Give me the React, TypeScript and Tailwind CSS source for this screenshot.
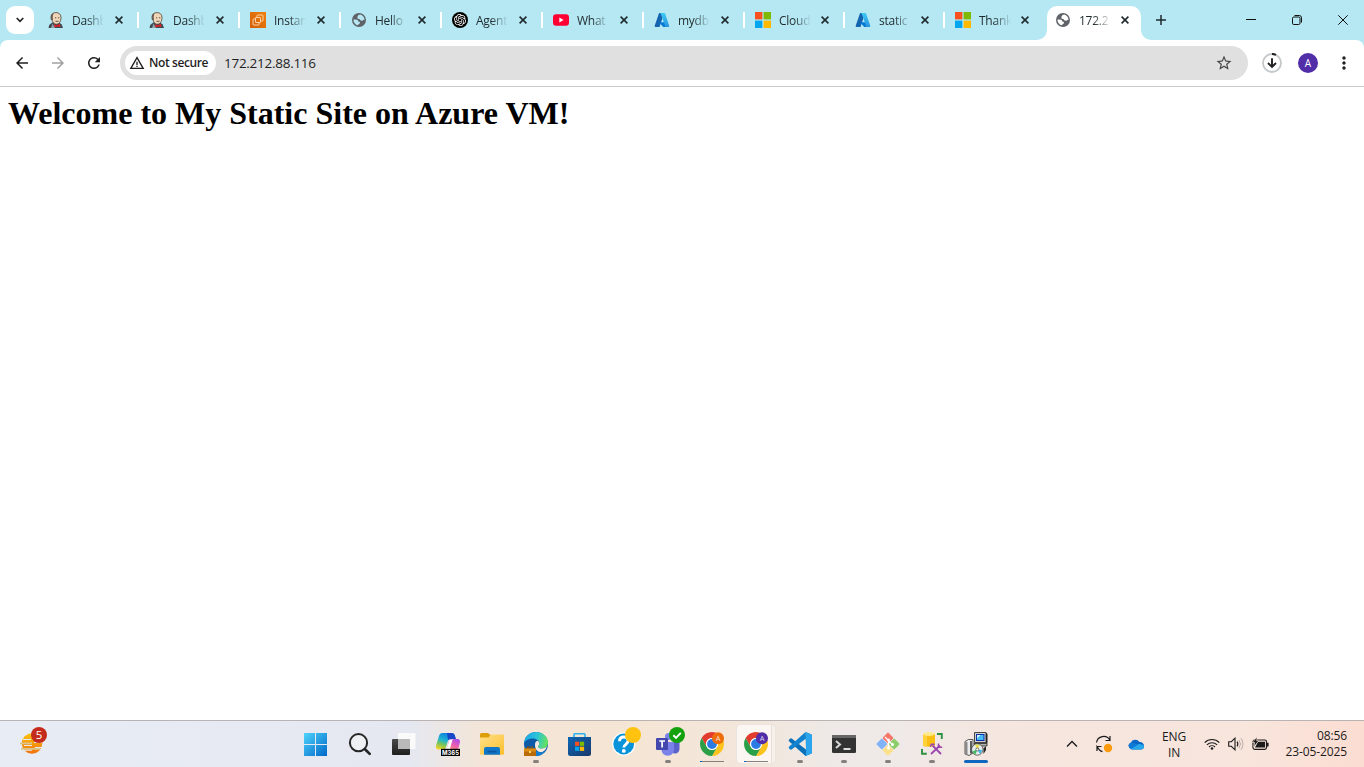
import type { ReactNode } from "react";
import {
  MdArrowBack,
  MdArrowForward,
  MdMoreVert,
  MdRefresh,
  MdStarBorder,
  MdWarningAmber,
} from "react-icons/md";
import { SiOpenai } from "react-icons/si";

const Jenkins = () => (
  <svg viewBox="0 0 16 16" className="size-4">
    <path d="M.5 16 1.200 13l3-2.500h7l2.500 2L15 16z" fill="#3f4b52" />
    <path d="M3.500 5C3.300 2 5.300.6 8 .6S13 2.200 13 5.500c0 4-1.800 6.700-4.600 6.700S3.700 9 3.500 5z" fill="#f0d6b7" stroke="#4a4039" strokeWidth=".8" />
    <path d="M3 8C2 4.500 2.800 1.600 5.500.900L4.700 5l.3 3z" fill="#6b5d53" />
    <path d="M7 5.800h1.300M10 5.800h1.300M7.500 9.300h3" stroke="#3a3431" strokeWidth=".8" />
    <path d="m6 12.300 3 1 3-1.500.4 3.500-3-.8-3 1z" fill="#d8232a" />
    <path d="M4.500 11.500 7 16H3z" fill="#8fa3ab" />
  </svg>
);

const Ec2 = () => (
  <svg viewBox="0 0 16 16" className="size-4">
    <defs>
      <linearGradient id="ec2" x1="0" y1="1" x2="1" y2="0">
        <stop stopColor="#d35f0a" />
        <stop offset="1" stopColor="#f0800b" />
      </linearGradient>
    </defs>
    <path d="M0 0h16v16H0z" fill="url(#ec2)" />
    <g fill="none" stroke="#ffdcb8" strokeWidth=".9">
      <path d="M7 5V3.500q0-.5.5-.5h5q.5 0 .5.500v5q0 .5-.5.500H11" />
      <path d="M5 7H3.500q-.5 0-.5.500v5q0 .5.500.500h5q.5 0 .5-.5V11" />
      <rect x="5.500" y="5.500" width="5" height="5" rx=".5" />
    </g>
  </svg>
);

const Globe = () => (
  <svg viewBox="0 0 16 16" className="size-4 text-[#5f6368]">
    <path
      fillRule="evenodd"
      fill="currentColor"
      d="M8 1a7 7 0 1 1 0 14A7 7 0 0 1 8 1zM9.200 2.600 7.500 3.100 6.300 5l.4 1.700 2.100.5.700 1.300 2 .2 1.200-.9.800.2c0-2.600-1.700-4.700-4.300-5.400zM2.500 7.500c-.2 2.700 1.500 4.900 4 5.800l2.200-1.800.3-1.500-1.700-.6-.6-1.400-1.900-.6z"
    />
  </svg>
);

const OpenAi = () => (
  <span className="flex size-4 items-center justify-center rounded-full bg-black text-white">
    <SiOpenai className="size-3" />
  </span>
);

const YouTube = () => (
  <svg viewBox="0 0 16 16" className="size-4">
    <rect y="2.300" width="16" height="11.400" rx="3" fill="#ff0033" />
    <path d="m6.300 5.500 4.300 2.500-4.300 2.500z" fill="#fff" />
  </svg>
);

const Azure = () => (
  <svg viewBox="0 0 16 16" className="size-4">
    <defs>
      <linearGradient id="az" x1="0" y1="0" x2="0" y2="1">
        <stop stopColor="#3ccbf4" />
        <stop offset="1" stopColor="#2892df" />
      </linearGradient>
    </defs>
    <path d="M5.800 1h4.300L5.700 14.400a.9.9 0 0 1-.8.600H1.500a.9.9 0 0 1-.8-1.200L4.900 1.600A.9.9 0 0 1 5.800 1z" fill="#1464b0" />
    <path d="M11.500 10.200H5l4 4.500.6.300h4z" fill="#0078d4" />
    <path d="M11.100 1.600a.9.9 0 0 0-.9-.6H5.900c.4 0 .7.200.8.600L11 13.800a.9.9 0 0 1-.9 1.200h4.300a.9.9 0 0 0 .8-1.200z" fill="url(#az)" />
  </svg>
);

const Microsoft = () => (
  <svg viewBox="0 0 16 16" className="size-4">
    <path d="M0 0h7.400v7.400H0z" fill="#f8501f" />
    <path d="M8.600 0H16v7.400H8.600z" fill="#7fba00" />
    <path d="M0 8.600h7.400V16H0z" fill="#00a4ef" />
    <path d="M8.600 8.600H16V16H8.600z" fill="#ffb900" />
  </svg>
);

const Close = () => (
  <svg viewBox="0 0 8 8" className="size-2">
    <path d="m.6.600 6.800 6.800M7.400.600.600 7.400" stroke="#202b2e" strokeWidth="1.600" />
  </svg>
);

function TabBody({ icon, title, narrow }: { icon: ReactNode; title: string; narrow?: boolean }) {
  return (
    <>
      <span className="flex size-4 shrink-0 items-center justify-center">{icon}</span>
      <span className="ml-2 w-9 shrink-0 pt-px text-[12px] leading-4 tracking-[-0.25px] whitespace-nowrap text-[#1f2a2d] [mask-image:linear-gradient(to_right,black_15px,transparent_32px)]">
        {title}
      </span>
      <span className={narrow ? "ml-1.5" : "ml-[7px]"}>
        <Close />
      </span>
    </>
  );
}

const tabs: { icon: ReactNode; title: string; narrow?: boolean }[] = [
  { icon: <Jenkins />, title: "Dashb" },
  { icon: <Jenkins />, title: "Dashb" },
  { icon: <Ec2 />, title: "Instan" },
  { icon: <Globe />, title: "Hello" },
  { icon: <OpenAi />, title: "Agent" },
  { icon: <YouTube />, title: "What" },
  { icon: <Azure />, title: "mydb" },
  { icon: <Microsoft />, title: "Cloud", narrow: true },
  { icon: <Azure />, title: "static", narrow: true },
  { icon: <Microsoft />, title: "Thank", narrow: true },
];

function TabStrip() {
  return (
    <div className="flex h-10 shrink-0 items-center">
      <div className="ml-1.5 flex h-7 w-7 items-center justify-center rounded-[9px] bg-white">
        <svg viewBox="0 0 8 6" className="h-1.5 w-2">
          <path d="m.7 1 3.300 3.300L7.300 1" fill="none" stroke="#1f1f1f" strokeWidth="1.600" />
        </svg>
      </div>
      <div className="ml-1.5 flex h-10 items-center">
        {tabs.map((t, i) => (
          <div key={i} className={`flex h-10 items-center pl-2 ${t.narrow ? "w-[100px]" : "w-[101px]"}`}>
            <TabBody icon={t.icon} title={t.title} narrow={t.narrow} />
            <span className={`ml-3.5 h-4 w-0.5 bg-white ${i === 9 ? "hidden" : ""}`} />
          </div>
        ))}
      </div>
      <div className="relative flex h-[34px] w-[94px] items-center self-end rounded-t-[10px] bg-white pb-[6px] pl-2">
        <TabBody icon={<Globe />} title="172.2" narrow />
        <svg viewBox="0 0 10 10" className="absolute bottom-0 -left-2.5 size-2.5">
          <path d="M10 0v10H0A10 10 0 0 0 10 0z" fill="#fff" />
        </svg>
        <svg viewBox="0 0 10 10" className="absolute -right-2.5 bottom-0 size-2.5">
          <path d="M0 0v10h10A10 10 0 0 1 0 0z" fill="#fff" />
        </svg>
      </div>
      <svg viewBox="0 0 10 10" className="ml-[15px] size-2.5">
        <path d="M5 0v10M0 5h10" stroke="#1f2a2d" strokeWidth="1.500" />
      </svg>
      <div className="mr-4 ml-auto flex items-center">
        <svg viewBox="0 0 10 10" className="size-2.5">
          <path d="M0 4.500h10" stroke="#111" />
        </svg>
        <svg viewBox="0 0 10 10" className="ml-9 size-2.5">
          <rect x=".5" y="2" width="7.500" height="7.500" rx="1.300" fill="none" stroke="#111" />
          <path d="M2.500.500H7.300Q9.500.500 9.500 2.700V7.500" fill="none" stroke="#111" />
        </svg>
        <svg viewBox="0 0 10 10" className="ml-9 size-2.5">
          <path d="m.3.300 9.400 9.400M9.700.300.300 9.700" stroke="#111" />
        </svg>
      </div>
    </div>
  );
}

function Toolbar() {
  return (
    <div className="flex h-[47px] shrink-0 items-center rounded-t-[8px] border-b border-[#c8cacb] bg-white text-[#1f1f1f]">
      <MdArrowBack className="ml-[13px] size-[18px]" />
      <MdArrowForward className="ml-[18px] size-[18px] text-[#a0a1a2]" />
      <MdRefresh className="ml-[18px] size-[18px]" />
      <div className="ml-[17px] flex h-[34px] w-[1128px] items-center rounded-full bg-[#e0e0e0] pl-[5px]">
        <div className="flex h-6 w-[91px] items-center rounded-full bg-white pl-1">
          <MdWarningAmber className="size-4" />
          <span className="ml-1 text-[12px] leading-4 font-semibold tracking-[-0.4px] whitespace-nowrap">Not secure</span>
        </div>
        <span className="ml-2 text-[13.5px] leading-5 tracking-[-0.27px]">172.212.88.116</span>
        <MdStarBorder className="mr-[15px] ml-auto size-[18px] text-[#474747]" />
      </div>
      <svg viewBox="0 0 20 20" className="ml-3.5 size-5">
        <circle cx="10" cy="10" r="9" fill="none" stroke="#c4c7ca" strokeWidth="1.800" />
        <path d="M10 1a9 9 0 0 1 4 .900" fill="none" stroke="#1f1f1f" strokeWidth="1.800" />
        <path d="M10 5.300v8.500M6 10l4 4 4-4" fill="none" stroke="#1f1f1f" strokeWidth="1.900" />
      </svg>
      <span className="ml-4 flex size-5 items-center justify-center rounded-full bg-[#512da8] text-[10px] text-white">A</span>
      <MdMoreVert className="ml-4 size-5" />
    </div>
  );
}

const Start = () => (
  <svg viewBox="0 0 24 24" className="size-6">
    <defs>
      <linearGradient id="win" x1="0" y1="0" x2="1" y2="1">
        <stop stopColor="#4fd4fb" />
        <stop offset="1" stopColor="#0067c8" />
      </linearGradient>
    </defs>
    <path d="M0 1h11v11H0zM12 1h11v11H12zM0 13h11v11H0zM12 13h11v11H12z" fill="url(#win)" />
  </svg>
);

const Search = () => (
  <svg viewBox="0 0 24 24" className="size-6">
    <circle cx="10.500" cy="10.700" r="8.600" fill="#eef0f4" stroke="#262626" strokeWidth="2" />
    <path d="m17 17.200 4.700 4.700" stroke="#262626" strokeWidth="2.700" strokeLinecap="round" />
  </svg>
);

const TaskView = () => (
  <svg viewBox="0 0 24 24" className="size-6">
    <defs>
      <linearGradient id="tv" x1="0" y1="0" x2="0" y2="1">
        <stop stopColor="#4a4a4a" />
        <stop offset="1" stopColor="#1e1e1e" />
      </linearGradient>
    </defs>
    <rect y="7" width="18" height="16" rx="1" fill="url(#tv)" />
    <rect x="6" y="1" width="17.500" height="16" rx="1" fill="#fafafa" />
    <path d="M6 7h12v10H6z" fill="#b9b9b9" />
  </svg>
);

const Copilot = () => (
  <svg viewBox="0 0 24 24" className="size-6 overflow-visible">
    <defs>
      <linearGradient id="cpa" x1=".6" y1="0" x2=".2" y2="1">
        <stop stopColor="#0b7be0" />
        <stop offset=".45" stopColor="#21b6cf" />
        <stop offset=".7" stopColor="#7bc558" />
        <stop offset="1" stopColor="#f5d327" />
      </linearGradient>
      <linearGradient id="cpb" x1=".8" y1="0" x2=".3" y2="1">
        <stop stopColor="#a94de8" />
        <stop offset=".5" stopColor="#e85bb5" />
        <stop offset="1" stopColor="#ff8f6b" />
      </linearGradient>
    </defs>
    <path d="M6.500 1h9c2 0 3 1 3.500 3l.8 3H15c-2.200 0-2.800.800-3.400 3L10 15c-.6 2-1.500 2.500-3.500 2.500H3c-3 0-3.500-2-2.800-4.500L3 4c.6-2 1.500-3 3.500-3z" fill="url(#cpa)" />
    <path d="M11 1h4.500c2 0 3 1 3.500 3l.8 3H15c-1.600 0-2.400.500-2.900 1.500z" fill="#1747c8" />
    <path d="M17 7h4c3 0 3.400 2 2.700 4.500L22 18H9l1.500-1 2.500-8c.5-1.500 2-2 4-2z" fill="url(#cpb)" />
    <path d="m13.500 8-3 9h3.500l2-7.500c.4-1.500 1-2.300 2-2.500z" fill="#fff" />
    <rect x="5" y="16.800" width="19" height="7.200" fill="#000" />
    <text x="14.500" y="22.900" textAnchor="middle" fontSize="6.800" fontWeight="700" fontFamily="Inter, sans-serif" fill="#fff" textLength="17" lengthAdjust="spacingAndGlyphs">
      M365
    </text>
  </svg>
);

const Folder = () => (
  <svg viewBox="0 0 24 24" className="size-6">
    <defs>
      <linearGradient id="fo" x1="0" y1="0" x2="1" y2="1">
        <stop stopColor="#ffe08a" />
        <stop offset="1" stopColor="#fcbf2d" />
      </linearGradient>
    </defs>
    <path d="M0 2.500Q0 1 1.500 1H8l2.500 2H24v8H0z" fill="#dd9e08" />
    <path d="M0 5.500h8.500L11 2.500h12q1 0 1 1v18q0 1.200-1.200 1.200H1.200Q0 22.700 0 21.500z" fill="url(#fo)" />
    <path d="M4 22.700V17q0-2 2-2h12q2 0 2 2v5.700z" fill="#0f76c9" />
    <path d="M7.500 18.800h9v1.700h-9z" fill="#0b57a0" />
  </svg>
);

const Edge = () => (
  <svg viewBox="0 0 24 24" className="size-6">
    <defs>
      <linearGradient id="eg" x1="0" y1=".3" x2="1" y2=".5">
        <stop stopColor="#1aa5e8" />
        <stop offset=".5" stopColor="#2cc3d8" />
        <stop offset="1" stopColor="#66e35c" />
      </linearGradient>
    </defs>
    <circle cx="12" cy="12" r="12" fill="#0d5aa9" />
    <path d="M0 11.500C.6 4.500 5.500 0 12 0c7 0 12 5 12 10.500 0 4-3 6-6 6-2.500 0-4-.8-4-1.800s1.300-1.200 1.300-3.200C15.300 8.500 12 6.500 8.500 6.500 4 6.500 1 9 0 11.500z" fill="url(#eg)" />
    <path d="M11 13c0-2.500.8-4 2.500-4.300 1.200.6 1.800 1.600 1.800 2.800 0 2-1.300 2.200-1.300 3.200s1.500 1.800 4 1.800c2 0 3.500-.6 4.800-1.900-.8 3-2.300 4.400-4.300 5.400C14.500 21 11 18 11 13z" fill="#f6eadf" />
    <path d="M8 13c0 5 5 8 10.500 7 1-.2 2-.8 3-1.400C19.500 22 16 24 12 24c-3 0-5-3-6-6z" fill="#147fd0" />
    <path d="M3.500 17v-2h5v2" fill="none" stroke="#8a4b05" strokeWidth="1.200" />
    <path d="M0 16.500h12V24H0z" fill="#bb6a08" />
    <path d="M0 16.500h12v3H0z" fill="#dc8b12" />
    <path d="M5 18.800h2v2.200H5z" fill="#ffd35c" />
  </svg>
);

const Store = () => (
  <svg viewBox="0 0 24 24" className="size-6">
    <defs>
      <linearGradient id="st" x1="0" y1="0" x2="1" y2="1">
        <stop stopColor="#0b66b5" />
        <stop offset="1" stopColor="#1c3a6b" />
      </linearGradient>
    </defs>
    <path d="M6 6V2.500Q6 1.800 6.800 1.800h9.400q.8 0 .8.700V6" fill="none" stroke="#2bb3ee" strokeWidth="1.600" />
    <path d="M0 5h23v16.500Q23 24 20.500 24h-18Q0 24 0 21.500z" fill="url(#st)" />
    <path d="M7 9.700h4.200v4.200H7z" fill="#f25022" />
    <path d="M11.900 9.700h4.200v4.200h-4.200z" fill="#7fba00" />
    <path d="M7 14.700h4.200v4.200H7z" fill="#00a4ef" />
    <path d="M11.900 14.700h4.200v4.200h-4.200z" fill="#ffb900" />
  </svg>
);

const Help = () => (
  <svg viewBox="0 0 24 24" className="size-6 overflow-visible">
    <circle cx="11.700" cy="12" r="11.600" fill="#fff" />
    <circle cx="11.700" cy="12" r="10.400" fill="#0a93d8" />
    <path d="M7.500 9.300c0-2.800 1.700-4.300 4.300-4.300s4.300 1.400 4.300 3.800c0 3.400-4.300 3.500-4.300 6.600" fill="none" stroke="#fff" strokeWidth="2.900" />
    <circle cx="11.800" cy="18.900" r="1.900" fill="#fff" />
    <circle cx="21" cy="3" r="8" fill="#ffc20e" />
  </svg>
);

const Teams = () => (
  <svg viewBox="0 0 24 24" className="size-6 overflow-visible">
    <circle cx="19.500" cy="7" r="3" fill="#5a62c8" />
    <path d="M15 10h8.500v6.500c0 3-2 5-4.500 5s-4-2-4-5z" fill="#5b62c9" />
    <circle cx="12.500" cy="4.500" r="3.500" fill="#7b83eb" />
    <path d="M5.500 10H18v7.500c0 3.500-2.800 6.200-6.300 6.200s-6.200-2.700-6.200-6.200z" fill="#7b83eb" />
    <rect y="6" width="12" height="12" rx="1" fill="#4448ac" />
    <path d="M3.200 9h5.800M6.100 9v6.500" stroke="#fff" strokeWidth="1.700" />
    <circle cx="21" cy="3" r="8" fill="#13a10e" />
    <path d="m17.300 3.200 2.700 2.600 4.800-5" fill="none" stroke="#fff" strokeWidth="1.900" />
  </svg>
);

function Chrome({ badge }: { badge: string }) {
  return (
    <svg viewBox="0 0 24 24" className="size-6 overflow-visible">
      <path d="M12 6h10.390A12 12 0 0 0 1.610 6l5.194 9A6 6 0 0 1 12 6z" fill="#e23b2e" />
      <path d="M12 6h10.390A12 12 0 0 1 12 24l5.196-9A6 6 0 0 0 12 6z" fill="#fcc31e" />
      <path d="M6.804 15 1.610 6A12 12 0 0 0 12 24l5.196-9a6 6 0 0 1-10.392 0z" fill="#2b9f48" />
      <circle cx="12" cy="12" r="6" fill="#fff" />
      <circle cx="12" cy="12" r="4.900" fill="#2a7be4" />
      <circle cx="18" cy="6.300" r="6" fill={badge} />
      <text x="18" y="9" textAnchor="middle" fontSize="7.500" fill="#fff" fillOpacity=".8">
        A
      </text>
    </svg>
  );
}

const VsCode = () => (
  <svg viewBox="0 0 24 24" className="size-6">
    <path d="M17.500 0 24 2.800v18.400L17.500 24 1 9.300c-.5-.5-.5-1 0-1.500L2.300 6.600q.7-.5 1.400 0L18 17.500z" fill="#0a70b8" />
    <path d="M17.500 0 1 14.700c-.5.500-.5 1 0 1.500l1.300 1.200q.7.500 1.400 0L18 6.500z" fill="#1383cf" />
    <path d="M17.500 0 24 2.800v18.400L17.500 24q.7-.5.500-1.500v-21q0-1-.5-1.500z" fill="#2ba6ee" />
  </svg>
);

const Terminal = () => (
  <svg viewBox="0 0 24 24" className="size-6">
    <rect y="3" width="24" height="18" rx="1.200" fill="#333" />
    <path d="M0 4.200Q0 3 1.200 3h21.600Q24 3 24 4.200V6H0z" fill="#666" />
    <path d="m4 9 4 3.500L4 16" fill="none" stroke="#d8d8d8" strokeWidth="2" />
    <path d="M11.500 17h7" stroke="#fff" strokeWidth="1.700" />
  </svg>
);

const Git = () => (
  <svg viewBox="0 0 24 24" className="size-6">
    <g transform="rotate(45 12 12)">
      <rect x="3.700" y="3.700" width="8" height="8" rx="1" fill="#f5776a" />
      <rect x="12.400" y="3.700" width="8" height="8" rx="1" fill="#8ccf6a" />
      <rect x="3.700" y="12.400" width="8" height="8" rx="1" fill="#80b3f7" />
      <rect x="12.400" y="12.400" width="8" height="8" rx="1" fill="#fde08a" />
    </g>
    <path d="m9 5 3.500 3.500V16M12.500 9l4 3.500" fill="none" stroke="#fff" strokeWidth="1.200" />
    <g fill="#fff">
      <circle cx="12.500" cy="8" r="1.500" />
      <circle cx="12.500" cy="16" r="1.500" />
      <circle cx="16.500" cy="12.500" r="1.500" />
    </g>
  </svg>
);

const Database = () => (
  <svg viewBox="0 0 24 24" className="size-6">
    <path d="M3 2v11c0 2.200 12 2.200 12 0V2z" fill="#f9bf14" />
    <path d="M3 2v11c0 1 1.500 1.500 4 1.600V3z" fill="#ffd23a" />
    <ellipse cx="9" cy="2" rx="6" ry="1.900" fill="#ffe98a" />
    <path d="M17 2h4.800v5M6.800 21.800H2V17" fill="none" stroke="#2e9142" strokeWidth="1.900" />
    <path d="m12.500 13.500 8.500 8.500M20 13.500 11 22" stroke="#9b45ae" strokeWidth="1.800" />
    <path d="m10.200 14.800 1.200-2.600h3.200M18.500 11.500v3.800h3.700" fill="none" stroke="#9b45ae" strokeWidth="1.500" />
  </svg>
);

const Installer = () => (
  <svg viewBox="0 0 24 24" className="size-6">
    <path d="M1 9.500 4.500 7.500h4.500V21l-4 2.500-4-1.500z" fill="#ececec" stroke="#333" strokeWidth=".8" />
    <path d="m1 9.500 2.500.800V23L1 22z" fill="#8a8a8a" />
    <path d="M7 9v12.500" stroke="#222" strokeWidth="1.400" />
    <path d="M10.500.500h11.500v10H10.500z" fill="#d0d0d0" stroke="#333" strokeWidth=".9" />
    <path d="M22 .500 23.500 2v9.500l-1.500-1z" fill="#222" />
    <path d="M12 2h8.500v7H12z" fill="#0d2fae" />
    <path d="M13 3h6.500v5H13z" fill="#43bdf5" />
    <path d="m13 3h3.500l-3.500 3.500z" fill="#d5f5ff" />
    <path d="M10 11.500h13v2.500H12z" fill="#b5b5b5" stroke="#222" strokeWidth=".8" />
    <circle cx="13.300" cy="17.500" r="5.700" fill="#e4eeec" stroke="#444" strokeWidth=".8" />
    <path d="m13.300 17.500-2.500-5 5 .5z" fill="#eee04c" />
    <path d="m13.300 17.500-5 2 3 3.200z" fill="#3fbd5e" />
    <path d="m13.300 17.500 5.200.8-2.500 3.700z" fill="#3fb4e4" />
    <circle cx="13.300" cy="17.500" r="1.500" fill="#fff" stroke="#444" strokeWidth=".7" />
    <path d="m19.500 16 2.500-1.500v3.500l-2.500 4z" fill="#222" />
  </svg>
);

type Marker = "dot" | "line" | "bar" | "none";
const apps: { icon: ReactNode; marker: Marker; active?: boolean }[] = [
  { icon: <Start />, marker: "none" },
  { icon: <Search />, marker: "none" },
  { icon: <TaskView />, marker: "none" },
  { icon: <Copilot />, marker: "none" },
  { icon: <Folder />, marker: "none" },
  { icon: <Edge />, marker: "dot" },
  { icon: <Store />, marker: "none" },
  { icon: <Help />, marker: "none" },
  { icon: <Teams />, marker: "dot" },
  { icon: <Chrome badge="#ef6c0a" />, marker: "line" },
  { icon: <Chrome badge="#512da8" />, marker: "line", active: true },
  { icon: <VsCode />, marker: "dot" },
  { icon: <Terminal />, marker: "dot" },
  { icon: <Git />, marker: "dot" },
  { icon: <Database />, marker: "dot" },
  { icon: <Installer />, marker: "bar" },
];

const markerClass: Record<Marker, string> = {
  none: "h-[3px]",
  dot: "h-[3px] w-1.5 rounded-full bg-[#85807c]",
  line: "mt-px mb-px h-px w-6 bg-[linear-gradient(to_right,#0067c0_2px,#85807c_2px)]",
  bar: "h-[3px] w-6 rounded-full bg-[#0f67c0]",
};

function Taskbar() {
  return (
    <div className="flex h-[47px] shrink-0 items-start border-t border-[#b9b4b3] bg-[linear-gradient(to_right,#e8ecf4_0px,#e5e8f1_410px,#f3e5d8_480px,#f5e5d4_620px,#f3e6da_740px,#eee9e6_830px,#efe9e7_900px,#f5e6df_1000px,#f8e5dc_1250px,#fcddd2_1364px)]">
      <div className="flex w-[294px] pt-1 pl-5">
        <svg viewBox="0 0 30 30" className="mt-0.5 size-[30px] overflow-visible">
          <defs>
            <linearGradient id="sun" x1="0" y1="0" x2="0" y2="1">
              <stop stopColor="#fbc30f" />
              <stop offset="1" stopColor="#f2720c" />
            </linearGradient>
          </defs>
          <circle cx="12" cy="16.500" r="10.300" fill="url(#sun)" />
          <path d="M3 12.500h8M14 15.500h8M4 18.500h8M15 20.500h7M2 23.200h10" stroke="#e6eaf3" strokeWidth="1.200" />
          <path d="M0 16.300h12M1 21.800h19" stroke="#dcc58d" strokeWidth="1.700" />
          <circle cx="19" cy="8" r="8" fill="#c42b1c" />
          <text x="19" y="12.200" textAnchor="middle" fontSize="11.500" fill="#fff">
            5
          </text>
        </svg>
      </div>
      <div className="flex">
        {apps.map((a, i) => (
          <div key={i} className="flex w-11 justify-center pt-1">
            <div
              className={`flex h-[38px] w-[38px] flex-col items-center justify-between rounded-[4px] pt-[7px] ${
                a.active
                  ? "bg-[linear-gradient(to_right,#fbf6f2_34px,#e6ddd6_34px,#e6ddd6_35px,#f7f1ec_35px)] shadow-[0_0_0_1px_#ece4dd]"
                  : ""
              }`}
            >
              {a.icon}
              <span className={markerClass[a.marker]} />
            </div>
          </div>
        ))}
      </div>
      <div className="ml-auto flex h-[46px] items-center pr-[17px] text-[12px] leading-4 tracking-[-0.1px] text-[#1b1b1b]">
        <svg viewBox="0 0 12 8" className="h-2 w-3">
          <path d="m1 6.500 5-5 5 5" fill="none" stroke="#1b1b1b" strokeWidth="1.300" />
        </svg>
        <svg viewBox="0 0 18 18" className="ml-[17px] size-[18px]">
          <path d="M1.500 7.500A7.200 7.200 0 0 1 14.800 5M15 1v4.500h-4.500M1.500 11.500h5M2 16v-4.500l2.500 3.500q1.500 1.300 3 1.600" fill="none" stroke="#1b1b1b" strokeWidth="1.200" />
          <circle cx="13" cy="13" r="4.200" fill="#fb9a0d" />
        </svg>
        <svg viewBox="0 0 16 11" className="ml-[15px] h-[11px] w-4">
          <path d="M4 10.500A3.700 3.700 0 0 1 2.700 3.700 5 5 0 0 1 11.500 3a4 4 0 0 1 4.500 4 3.500 3.500 0 0 1-3.500 3.500z" fill="#0a66c2" />
          <path d="m2 9.700 8-4.500q3-1 6 1.600a3.600 3.600 0 0 1-3.500 3.700H4q-1.200 0-2-.8z" fill="#28a8ea" />
          <path d="m.3 6.500q.5-2.500 3-2.900l6.700 2-6.700 4.200Q.600 9 .300 6.500z" fill="#0f7ad6" />
        </svg>
        <div className="ml-[17px] w-[26px] pt-px text-center">
          <div>ENG</div>
          <div>IN</div>
        </div>
        <svg viewBox="0 0 16 12" className="ml-[17px] h-3 w-4">
          <g fill="none" stroke="#1b1b1b" strokeWidth="1.100">
            <path d="M.7 4.600a10.300 10.300 0 0 1 14.600 0M2.900 6.800a7.200 7.200 0 0 1 10.200 0M5 9a4.300 4.300 0 0 1 6 0" />
          </g>
          <circle cx="8" cy="10.500" r="1.300" fill="#1b1b1b" />
        </svg>
        <svg viewBox="0 0 16 14" className="ml-2 h-3.5 w-4">
          <path d="M.7 4.700h2.600L7 1.200v11.600L3.300 9.300H.700z" fill="none" stroke="#1b1b1b" strokeWidth="1.100" />
          <path d="M9 4.600q1.800 2.400 0 4.800" fill="none" stroke="#1b1b1b" strokeWidth="1.100" />
          <path d="M11 3q3 4 0 8M13 1.200q4 5.800 0 11.600" fill="none" stroke="#b7aca7" />
        </svg>
        <svg viewBox="0 0 17 14" className="ml-2 h-3.5 w-[17px]">
          <rect x="1" y="3" width="13.500" height="9.400" rx="1.800" fill="none" stroke="#1b1b1b" strokeWidth="1.200" />
          <path d="M6 4.800h7v5.800H3zM15 5.800h1.600v3.700H15z" fill="#1b1b1b" />
          <path d="M5 0 .300 5.500h2.300L1.800 9.800l5-6H4.700z" fill="#1b1b1b" stroke="#f8e4da" strokeWidth=".6" />
        </svg>
        <div className="ml-[15px] w-[63px] text-right whitespace-nowrap">
          <div>08:56</div>
          <div>23-05-2025</div>
        </div>
      </div>
    </div>
  );
}

export default function App() {
  return (
    <div className="flex h-[767px] w-[1364px] flex-col overflow-hidden bg-[#b5e8f3] font-['Open_Sans',sans-serif]">
      <TabStrip />
      <Toolbar />
      <main className="flex-1 bg-white px-2 pt-2">
        <h1 className="font-['Liberation_Serif',serif] text-[32px] leading-[37px] font-bold text-black">
          Welcome to My Static Site on Azure VM!
        </h1>
      </main>
      <Taskbar />
    </div>
  );
}
